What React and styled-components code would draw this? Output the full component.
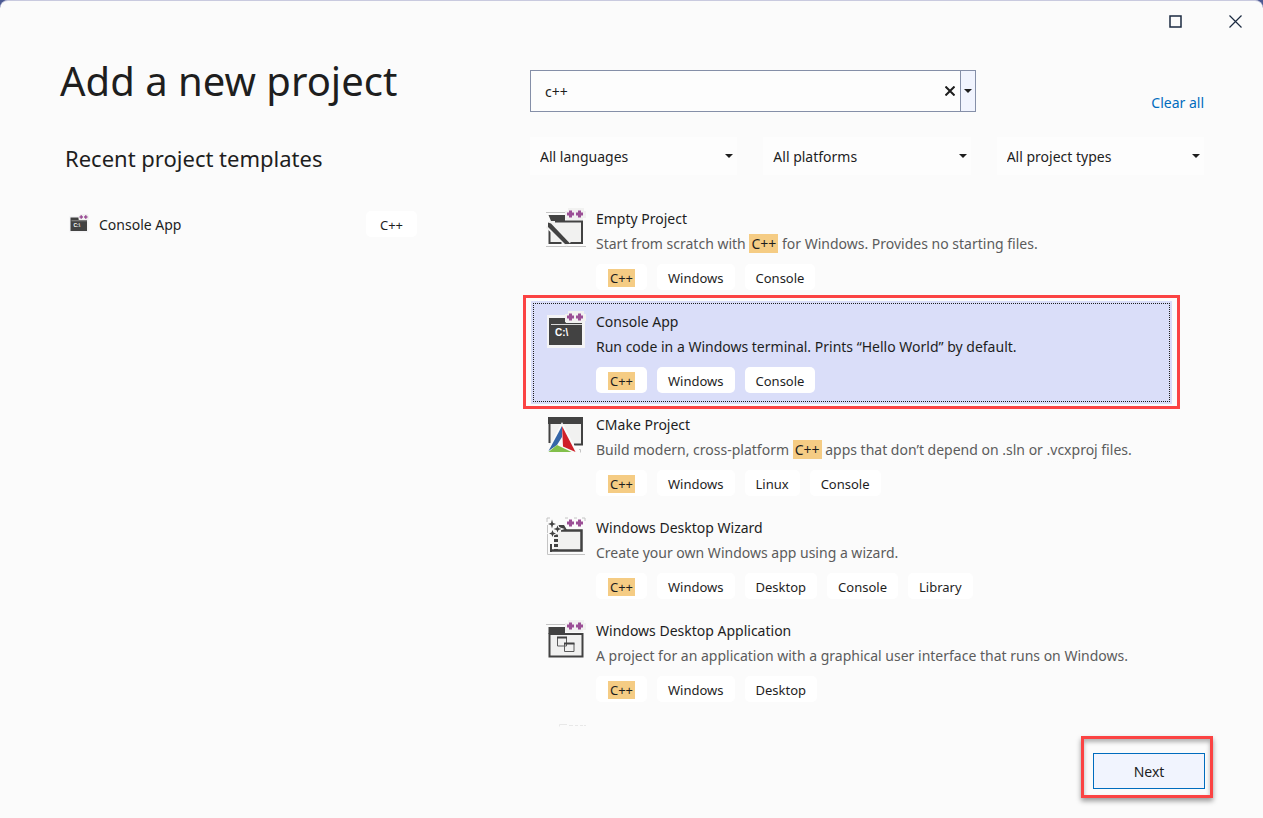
import React, { useState } from 'react';
import styled, { createGlobalStyle } from 'styled-components';

const INK = '#424242';
const PLATE = '#f1f1f0';

const templates = [
  {
    id: 'empty',
    name: 'Empty Project',
    description: 'Start from scratch with C++ for Windows. Provides no starting files.',
    tags: ['C++', 'Windows', 'Console'],
  },
  {
    id: 'console',
    name: 'Console App',
    description: 'Run code in a Windows terminal. Prints “Hello World” by default.',
    tags: ['C++', 'Windows', 'Console'],
  },
  {
    id: 'cmake',
    name: 'CMake Project',
    description: 'Build modern, cross-platform C++ apps that don’t depend on .sln or .vcxproj files.',
    tags: ['C++', 'Windows', 'Linux', 'Console'],
  },
  {
    id: 'wizard',
    name: 'Windows Desktop Wizard',
    description: 'Create your own Windows app using a wizard.',
    tags: ['C++', 'Windows', 'Desktop', 'Console', 'Library'],
  },
  {
    id: 'desktop',
    name: 'Windows Desktop Application',
    description: 'A project for an application with a graphical user interface that runs on Windows.',
    tags: ['C++', 'Windows', 'Desktop'],
  },
];

const filters = ['All languages', 'All platforms', 'All project types'];

const PlusPlus = () => (
  <>
    <path d="M19 11V3h3V0h16v3h2v7h-3v2H21z" fill={PLATE} />
    <path d="M24.5 2.500v7M21 6h7M33.500 2.500v7M30 6h7" stroke="#9b4f96" strokeWidth="3" />
  </>
);

const EmptyIcon = () => (
  <>
    <path d="M0 4.500h19M0 38.500h40" stroke="#c4c4c4" />
    <path d="M3 13h34v23H3z" fill={PLATE} />
    <path d="M2.500 7h16.500v6H5z" fill={INK} />
    <path d="M9 13.500h27V35H24M3.500 21v14h12" fill="none" stroke={INK} strokeWidth="2" />
    <path d="M2 17l21 19" stroke={PLATE} strokeWidth="7" />
    <path d="M2 14.500l3 1L24.500 36H19L2 19z" fill={INK} />
    <PlusPlus />
  </>
);

const ConsoleIcon = () => (
  <>
    <path d="M1 4h20v6h18v27H1z" fill="#f3f3f5" />
    <path d="M3 7h17v5h16v22H3z" fill={INK} />
    <path d="M5 13.500h31" stroke="#d8d8d8" />
    <text x="9" y="25" fill="#ffffff" fontFamily="Liberation Sans, sans-serif" fontSize="10" fontWeight="700">
      C:\
    </text>
    <PlusPlus />
  </>
);

const CMakeIcon = () => (
  <>
    <path d="M3 4h34v27H3z" fill={PLATE} />
    <path d="M2 3h35v7H2z" fill={INK} />
    <path d="M3.500 9v20M36 9v21.500h-8" fill="none" stroke={INK} strokeWidth="2" />
    <path d="M16 8L0 38.500h32z" fill="#fafafa" />
    <path d="M16 12L2.500 37 11 31l5-8z" fill="#3566a8" />
    <path d="M16 12l1 20.500 12.500 5.500z" fill="#cf2029" />
    <path d="M2.500 38L11 31l14.500 7z" fill="#82bf4a" />
    <path d="M33 35.500h1.500v3" fill="none" stroke="#c4c4c4" />
  </>
);

const WizardIcon = () => (
  <>
    <path d="M1.500 8v29.500H39" fill="none" stroke="#c4c4c4" />
    <path d="M8 13h28v21H8z" fill={PLATE} />
    <path d="M12 8h6l3 5h-6z" fill={INK} />
    <path d="M15 13.500h20.500v20H4" fill="none" stroke={INK} strokeWidth="2.500" />
    <path d="M5 27v8" stroke={INK} strokeWidth="2" />
    <path d="M10 17v16" stroke={INK} strokeWidth="4" strokeDasharray="3 2" />
    <path
      d="M6 2.500l1 3.500 3 1-3 1-1 3.500-1-3.500-3-1 3-1zM11.500 8.500l1 2.500 3 1-3 1-1 2.500-1-2.500-3-1 3-1zM6.500 13l1 2.500 2.500 1-2.500 1-1 2.500-1-2.500-2.500-1 2.500-1z"
      fill={INK}
      stroke="#fafafa"
      strokeWidth="2"
      paintOrder="stroke"
    />
    <path d="M1 5V1h3M19 1h3M28 1h3M36 1h3v3" fill="none" stroke="#c4c4c4" />
    <path d="M24.500 2.500v7M21 6h7M33.500 2.500v7M30 6h7" stroke="#9b4f96" strokeWidth="3" />
  </>
);

const DesktopIcon = () => (
  <>
    <path d="M0 4.500h19" stroke="#c4c4c4" />
    <path d="M2.500 7H19v7H2.500z" fill={INK} />
    <path d="M3.500 14h33v22.500h-33z" fill={PLATE} stroke={INK} strokeWidth="2" />
    <path d="M11.500 17.500h9V26h-9zM18.500 23.500h9.500v8h-9.500z" fill={PLATE} stroke="#5c5c5c" />
    <path d="M11 17.500h10M18 23.500h10.500" stroke={INK} strokeWidth="2" />
    <PlusPlus />
  </>
);

// Top edge of the next template, still fading in under the list's lower end
const LoadingIcon = () => (
  <path d="M13.500 3.500v-2H21M23 2.500h4M29 2.500h3M34 2.500h3M38 2.500h2" fill="none" stroke="#e8e8e8" />
);

const icons = {
  empty: EmptyIcon,
  console: ConsoleIcon,
  cmake: CMakeIcon,
  wizard: WizardIcon,
  desktop: DesktopIcon,
  loading: LoadingIcon,
};

const TemplateIcon = ({ name, size = 40 }) => {
  const Drawing = icons[name];
  return (
    <IconSvg viewBox="0 0 40 40" width={size} height={size} aria-hidden="true">
      <Drawing />
    </IconSvg>
  );
};

const Caret = () => (
  <svg width="8" height="4" viewBox="0 0 8 4" aria-hidden="true">
    <path d="M0 0h8L4 4z" fill="#1e1e1e" />
  </svg>
);

const Highlighted = ({ text }) =>
  text.split(/(C\+\+)/).map((part, i) => (part === 'C++' ? <Mark key={i}>{part}</Mark> : part));

const App = () => {
  const [query, setQuery] = useState('c++');
  const [selected, setSelected] = useState('console');

  return (
    <Desktop>
      <GlobalStyle />
      <Dialog>
        <TitleBar>
          <WindowButton aria-label="Maximize">
            <svg width="13" height="13" viewBox="0 0 13 13">
              <path d="M1 1h11v11H1z" fill="none" stroke="#1b2a41" strokeWidth="1.500" />
            </svg>
          </WindowButton>
          <WindowButton aria-label="Close">
            <svg width="13" height="13" viewBox="0 0 13 13">
              <path d="M.5.5l12 12M12.500.5l-12 12" stroke="#1b2a41" strokeWidth="1.200" />
            </svg>
          </WindowButton>
        </TitleBar>

        <Content>
          <RecentPane>
            <Title>Add a new project</Title>
            <Subtitle>Recent project templates</Subtitle>
            <RecentItem>
              <TemplateIcon name="console" size={20} />
              <RecentName>Console App</RecentName>
              <Tag>C++</Tag>
            </RecentItem>
          </RecentPane>

          <TemplatePane>
            <SearchRow>
              <SearchBox>
                <SearchInput
                  aria-label="Search for templates"
                  value={query}
                  onChange={(e) => setQuery(e.target.value)}
                />
                <ClearButton aria-label="Clear search" onClick={() => setQuery('')}>
                  <svg width="10" height="10" viewBox="0 0 10 10">
                    <path d="M.5.5l9 9M9.500.5l-9 9" stroke="#1e1e1e" strokeWidth="2" />
                  </svg>
                </ClearButton>
                <HistoryButton aria-label="Recent searches">
                  <Caret />
                </HistoryButton>
              </SearchBox>
              <ClearAll href="#clear">Clear all</ClearAll>
            </SearchRow>

            <Filters>
              {filters.map((label) => (
                <Filter key={label}>
                  <FilterSelect aria-label={label}>
                    <option>{label}</option>
                  </FilterSelect>
                  <Caret />
                </Filter>
              ))}
            </Filters>

            <TemplateList role="listbox" aria-label="Project templates">
              {templates.map(({ id, name, description, tags }) => (
                <TemplateItem
                  key={id}
                  role="option"
                  aria-selected={selected === id}
                  $selected={selected === id}
                  onClick={() => setSelected(id)}
                >
                  <TemplateIcon name={id} />
                  <TemplateBody>
                    <TemplateName>{name}</TemplateName>
                    <Description $selected={selected === id}>
                      <Highlighted text={description} />
                    </Description>
                    <Tags>
                      {tags.map((tag) => (
                        <Tag key={tag}>
                          <Highlighted text={tag} />
                        </Tag>
                      ))}
                    </Tags>
                  </TemplateBody>
                </TemplateItem>
              ))}
              <TemplateItem aria-hidden="true">
                <TemplateIcon name="loading" />
              </TemplateItem>
            </TemplateList>
          </TemplatePane>
        </Content>

        <Footer>
          <Callout>
            <NextButton>Next</NextButton>
          </Callout>
        </Footer>
      </Dialog>
    </Desktop>
  );
};

export default App;

const GlobalStyle = createGlobalStyle`
  * {
    box-sizing: border-box;
  }
  body {
    margin: 0;
    color: #1e1e1e;
    font-family: 'Noto Sans', 'Open Sans', sans-serif;
    font-size: 14px;
  }
  button,
  input,
  select {
    color: inherit;
    font: inherit;
  }
`;
const Desktop = styled.div`
  height: 100vh;
  background: #4c5a93;
`;
const Dialog = styled.main`
  height: 100%;
  display: flex;
  flex-direction: column;
  border-top: 1px solid #c9cadf;
  border-radius: 8px 8px 0 0;
  background: #fbfbfb;
  overflow: hidden;
`;
const TitleBar = styled.header`
  height: 39px;
  flex: none;
  display: flex;
  justify-content: flex-end;
  padding: 1px 6px 0 0;
`;
const WindowButton = styled.button`
  width: 44px;
  display: flex;
  justify-content: center;
  align-items: center;
  margin-left: 16px;
  padding: 0;
  border: none;
  background: none;
`;
const Content = styled.div`
  flex: 1;
  min-height: 0;
  display: grid;
  grid-template-columns: 470px minmax(0, 1fr);
  padding: 0 59px 0 60px;
`;
const RecentPane = styled.section`
  padding-top: 9px;
`;
const Title = styled.h1`
  margin: 0;
  font-size: 40px;
  font-weight: 400;
  line-height: 64px;
`;
const Subtitle = styled.h2`
  margin: 29px 0 0 5px;
  font-size: 22px;
  font-weight: 400;
  line-height: 32px;
`;
const RecentItem = styled.div`
  width: 357px;
  display: flex;
  align-items: center;
  gap: 10px;
  margin-top: 37px;
  padding-left: 9px;
`;
const RecentName = styled.span`
  flex: 1;
`;
const IconSvg = styled.svg`
  flex: none;
`;
const TemplatePane = styled.section`
  min-height: 0;
  display: flex;
  flex-direction: column;
  padding-top: 30px;
`;
const SearchRow = styled.div`
  display: flex;
  justify-content: space-between;
  align-items: flex-end;
`;
const SearchBox = styled.div`
  width: 446px;
  height: 42px;
  display: flex;
  border: 1px solid #858fa8;
  background: #fdfdfd;
`;
const SearchInput = styled.input`
  flex: 1;
  min-width: 0;
  padding: 0 14px;
  border: none;
  outline: none;
  background: none;
`;
const ClearButton = styled.button`
  width: 20px;
  display: flex;
  justify-content: center;
  align-items: center;
  padding: 0;
  border: none;
  background: none;
`;
const HistoryButton = styled(ClearButton)`
  width: 15px;
  border-left: 1px solid #858fa8;
  background: #f1f4fe;
`;
const ClearAll = styled.a`
  color: #006cbe;
  line-height: 18px;
  text-decoration: none;
`;
const Filters = styled.div`
  display: grid;
  grid-template-columns: repeat(3, 1fr);
  gap: 26px;
  margin-top: 25px;
`;
const Filter = styled.div`
  height: 38px;
  display: flex;
  align-items: center;
  padding-right: 4px;
  background: #fdfdfd;
`;
const FilterSelect = styled.select`
  flex: 1;
  min-width: 0;
  height: 100%;
  padding: 0 10px;
  border: none;
  outline: none;
  appearance: none;
  background: none;
`;
const TemplateList = styled.ul`
  flex: 1;
  min-height: 0;
  margin: 23px 24px 0 -8px;
  padding: 0 8px 0 9px;
  list-style: none;
  overflow: hidden;
`;
const TemplateItem = styled.li`
  position: relative;
  display: flex;
  gap: 10px;
  padding: 10px 15px 11px;
  cursor: default;
  ${({ $selected }) =>
    $selected &&
    `
    background: #dadef9;
    outline: 1px dotted #1e1e1e;
    outline-offset: -3px;
    &::after {
      content: '';
      position: absolute;
      inset: -6px -8px -5px;
      border: 3px solid #fb4343;
      pointer-events: none;
    }
  `}
`;
const TemplateBody = styled.div`
  min-width: 0;
  margin-top: -2px;
`;
const TemplateName = styled.h3`
  margin: 0;
  font-size: 14px;
  font-weight: 400;
  line-height: 25px;
`;
const Description = styled.p`
  margin: 0;
  color: ${({ $selected }) => ($selected ? '#1e1e1e' : '#5c5c5c')};
  line-height: 25px;
`;
const Tags = styled.div`
  display: flex;
  gap: 10px;
  margin-top: 8px;
`;
const Tag = styled.span`
  min-width: 51px;
  height: 26px;
  padding: 0 11px;
  border-radius: 5px;
  background: #ffffff;
  color: #1e1e1e;
  font-size: 13px;
  line-height: 28px;
  text-align: center;
`;
const Mark = styled.mark`
  padding: 0 2px;
  background: #f5cc84;
  color: #1e1e1e;
`;
const Footer = styled.footer`
  flex: none;
  display: flex;
  justify-content: flex-end;
  padding: 9px 50px 20px;
`;
const Callout = styled.div`
  padding: 14px 5px 6px 9px;
  border: 3px solid #fb4343;
  box-shadow: 0 3px 5px rgba(0, 0, 0, 0.4), inset 0 3px 4px rgba(0, 0, 0, 0.3);
`;
const NextButton = styled.button`
  display: block;
  width: 112px;
  height: 36px;
  border: 1px solid #006cbe;
  background: #f1f4fe;
`;
